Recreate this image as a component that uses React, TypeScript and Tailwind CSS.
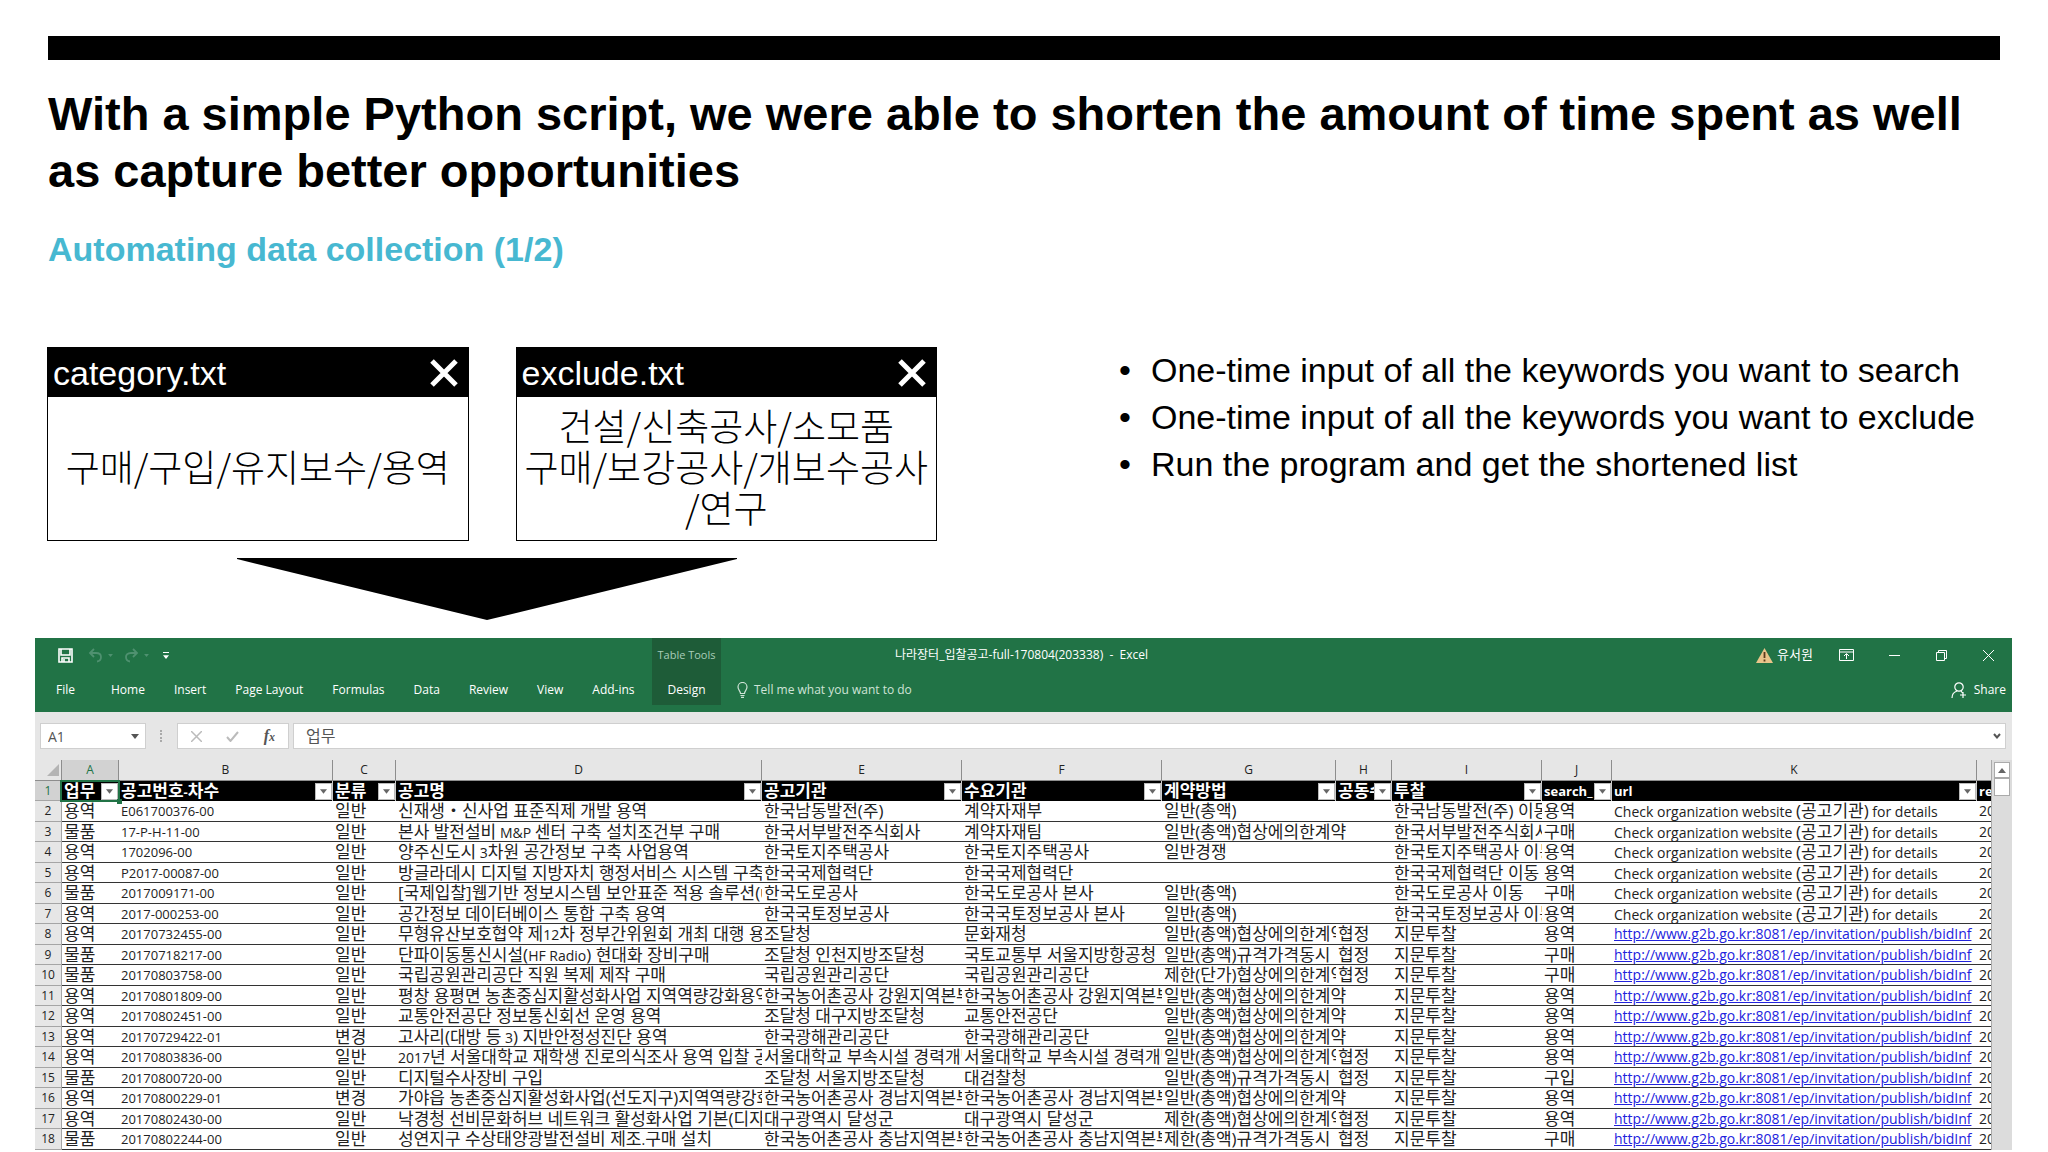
import { Fragment } from 'react'

const columns = [
  { letter: 'A', title: '업무', width: 'w-[57px]' },
  { letter: 'B', title: '공고번호-차수', width: 'w-[214px]' },
  { letter: 'C', title: '분류', width: 'w-[63px]' },
  { letter: 'D', title: '공고명', width: 'w-[366px]' },
  { letter: 'E', title: '공고기관', width: 'w-[200px]' },
  { letter: 'F', title: '수요기관', width: 'w-[200px]' },
  { letter: 'G', title: '계약방법', width: 'w-[174px]' },
  { letter: 'H', title: '공동수', width: 'w-[56px]' },
  { letter: 'I', title: '투찰', width: 'w-[150px]' },
  { letter: 'J', title: 'search_', width: 'w-[70px]' },
  { letter: 'K', title: 'url', width: '' },
  { letter: '', title: 're', width: 'w-[14px]' },
]

const SITE = 'Check organization website (공고기관) for details'
const URL = 'http://www.g2b.go.kr:8081/ep/invitation/publish/bidInf'

const rows = [
  ['용역', 'E061700376-00', '일반', '신재생・신사업 표준직제 개발 용역', '한국남동발전(주)', '계약자재부', '일반(총액)', '', '한국남동발전(주) 이동', '용역', SITE],
  ['물품', '17-P-H-11-00', '일반', '본사 발전설비 M&P 센터 구축 설치조건부 구매', '한국서부발전주식회사', '계약자재팀', '일반(총액)협상에의한계약', '', '한국서부발전주식회사', '구매', SITE],
  ['용역', '1702096-00', '일반', '양주신도시 3차원 공간정보 구축 사업용역', '한국토지주택공사', '한국토지주택공사', '일반경쟁', '', '한국토지주택공사 이동', '용역', SITE],
  ['용역', 'P2017-00087-00', '일반', '방글라데시 디지털 지방자치 행정서비스 시스템 구축사', '한국국제협력단', '한국국제협력단', '', '', '한국국제협력단 이동', '용역', SITE],
  ['물품', '2017009171-00', '일반', '[국제입찰]웹기반 정보시스템 보안표준 적용 솔루션(U', '한국도로공사', '한국도로공사 본사', '일반(총액)', '', '한국도로공사 이동', '구매', SITE],
  ['용역', '2017-000253-00', '일반', '공간정보 데이터베이스 통합 구축 용역', '한국국토정보공사', '한국국토정보공사 본사', '일반(총액)', '', '한국국토정보공사 이동', '용역', SITE],
  ['용역', '20170732455-00', '일반', '무형유산보호협약 제12차 정부간위원회 개최 대행 용역', '조달청', '문화재청', '일반(총액)협상에의한계약', '협정', '지문투찰', '용역', URL],
  ['물품', '20170718217-00', '일반', '단파이동통신시설(HF Radio) 현대화 장비구매', '조달청 인천지방조달청', '국토교통부 서울지방항공청', '일반(총액)규격가격동시', '협정', '지문투찰', '구매', URL],
  ['물품', '20170803758-00', '일반', '국립공원관리공단 직원 복제 제작 구매', '국립공원관리공단', '국립공원관리공단', '제한(단가)협상에의한계약', '협정', '지문투찰', '구매', URL],
  ['용역', '20170801809-00', '일반', '평창 용평면 농촌중심지활성화사업 지역역량강화용역', '한국농어촌공사 강원지역본부', '한국농어촌공사 강원지역본부', '일반(총액)협상에의한계약', '', '지문투찰', '용역', URL],
  ['용역', '20170802451-00', '일반', '교통안전공단 정보통신회선 운영 용역', '조달청 대구지방조달청', '교통안전공단', '일반(총액)협상에의한계약', '', '지문투찰', '용역', URL],
  ['용역', '20170729422-01', '변경', '고사리(대방 등 3) 지반안정성진단 용역', '한국광해관리공단', '한국광해관리공단', '일반(총액)협상에의한계약', '', '지문투찰', '용역', URL],
  ['용역', '20170803836-00', '일반', '2017년 서울대학교 재학생 진로의식조사 용역 입찰 공고', '서울대학교 부속시설 경력개발', '서울대학교 부속시설 경력개발', '일반(총액)협상에의한계약', '협정', '지문투찰', '용역', URL],
  ['물품', '20170800720-00', '일반', '디지털수사장비 구입', '조달청 서울지방조달청', '대검찰청', '일반(총액)규격가격동시', '협정', '지문투찰', '구입', URL],
  ['용역', '20170800229-01', '변경', '가야읍 농촌중심지활성화사업(선도지구)지역역량강화', '한국농어촌공사 경남지역본부', '한국농어촌공사 경남지역본부', '일반(총액)협상에의한계약', '', '지문투찰', '용역', URL],
  ['용역', '20170802430-00', '일반', '낙경청 선비문화허브 네트워크 활성화사업 기본(디자인', '대구광역시 달성군', '대구광역시 달성군', '제한(총액)협상에의한계약', '협정', '지문투찰', '용역', URL],
  ['물품', '20170802244-00', '일반', '성연지구 수상태양광발전설비 제조.구매 설치', '한국농어촌공사 충남지역본부', '한국농어촌공사 충남지역본부', '제한(총액)규격가격동시', '협정', '지문투찰', '구매', URL],
]

const tabs = ['Insert', 'Page Layout', 'Formulas', 'Data', 'Review', 'View', 'Add-ins']

const bullets = [
  'One-time input of all the keywords you want to search',
  'One-time input of all the keywords you want to exclude',
  'Run the program and get the shortened list',
]

// Hangul is set larger than the Latin letters and digits around it
function Mixed({ text }: { text: string }) {
  const parts = text.split(/([가-힣・()[\]]+(?:\s+(?=[가-힣]))?)/)
  return (
    <>
      {parts.map((part, i) =>
        i % 2 === 1 ? (
          <span key={i} className="text-[17px]">{part}</span>
        ) : (
          <Fragment key={i}>{part}</Fragment>
        )
      )}
    </>
  )
}

function Card({ name, children }: { name: string; children: React.ReactNode }) {
  return (
    <div className="flex h-[194px] flex-1 flex-col border border-black">
      <div className="flex h-[49px] items-center justify-between bg-black pl-[5px] pr-[10px] text-white">
        <span className="text-[34px] leading-[40px]">{name}</span>
        <button aria-label={`Close ${name}`}>
          <svg className="h-7 w-7" viewBox="0 0 28 28" stroke="currentColor" strokeWidth="5">
            <path d="M2 2L26 26M26 2L2 26" />
          </svg>
        </button>
      </div>
      <div className="flex flex-1 items-center justify-center pb-[4px] text-center font-['Noto_Sans_CJK_KR',sans-serif] text-[37px] font-light leading-[41px]">
        <p>{children}</p>
      </div>
    </div>
  )
}

function Caret({ className }: { className: string }) {
  return (
    <svg className={className} viewBox="0 0 8 5" fill="currentColor">
      <path d="M0 0h8L4 5z" />
    </svg>
  )
}

function TitleBar() {
  return (
    <div className="flex h-[34px] items-center">
      <div className="flex w-[617px] items-center pl-[23px]">
        <button aria-label="Save">
          <svg className="h-[15px] w-[15px]" viewBox="0 0 15 15" fill="none" stroke="currentColor" strokeWidth="1.6">
            <path d="M1 1h13v13H1zM3 1v6h9V1M4 14v-4h7v4M6 11v3" />
          </svg>
        </button>
        <button aria-label="Undo" className="ml-[15px] flex items-center gap-[5px] text-[#4f9170]">
          <svg className="h-[15px] w-[15px]" viewBox="0 0 15 15" fill="none" stroke="currentColor" strokeWidth="1.8">
            <path d="M6 1L2 5l4 4M2 5h6c7 0 6 8 1 8.500" />
          </svg>
          <Caret className="h-[3px] w-[5px]" />
        </button>
        <button aria-label="Redo" className="ml-[11px] flex items-center gap-[5px] text-[#4f9170]">
          <svg className="h-[15px] w-[15px]" viewBox="0 0 15 15" fill="none" stroke="currentColor" strokeWidth="1.8">
            <path d="M9 1l4 4-4 4M13 5H7C0 5 1 13 6 13.500" />
          </svg>
          <Caret className="h-[3px] w-[5px]" />
        </button>
        <button aria-label="Customize toolbar" className="ml-[14px] flex flex-col items-center gap-[2px]">
          <span className="h-px w-[6px] bg-white" />
          <Caret className="h-[4px] w-[6px]" />
        </button>
      </div>
      <div className="flex h-full w-[69px] items-center justify-center bg-[#1e5c38] text-[11px] text-[#a9cdb8]">Table Tools</div>
      <div className="flex-1 pl-[174px] text-[12px] whitespace-pre">나라장터_입찰공고-full-170804(203338)  -  Excel</div>
      <div className="flex items-center pr-[18px]">
        <svg className="h-[15px] w-[17px]" viewBox="0 0 17 15">
          <path d="M8.500 0L17 15H0z" fill="#e9c48a" />
          <path d="M8.500 4v6M8.500 11.500v2" stroke="#5a3a1c" strokeWidth="1.800" />
        </svg>
        <span className="ml-[4px] text-[13px]">유서원</span>
        <button aria-label="Ribbon display options" className="ml-[26px]">
          <svg className="h-[12px] w-[15px]" viewBox="0 0 15 12" fill="none" stroke="currentColor">
            <path d="M.5.500h14v11H.500zM.500 3h14M7.500 10V5M5 7l2.500-2.500L10 7" />
          </svg>
        </button>
        <button aria-label="Minimize" className="ml-[35px]">
          <svg className="h-[11px] w-[11px]" viewBox="0 0 11 11" stroke="currentColor">
            <path d="M0 5.500h11" />
          </svg>
        </button>
        <button aria-label="Restore" className="ml-[36px]">
          <svg className="h-[11px] w-[11px]" viewBox="0 0 11 11" fill="none" stroke="currentColor">
            <path d="M.5 2.500h8v8h-8zM2.500 2V.500h8v8H9" />
          </svg>
        </button>
        <button aria-label="Close" className="ml-[36px]">
          <svg className="h-[11px] w-[11px]" viewBox="0 0 11 11" stroke="currentColor">
            <path d="M0 0l11 11M11 0L0 11" />
          </svg>
        </button>
      </div>
    </div>
  )
}

function Ribbon() {
  return (
    <nav className="flex h-[40px] items-start text-[12px] leading-[36px]">
      <div className="flex w-[617px] pl-[21px]">
        <button>File</button>
        <button className="ml-[36px]">Home</button>
        {tabs.map((tab) => (
          <button key={tab} className="ml-[29px] whitespace-nowrap">{tab}</button>
        ))}
      </div>
      <button className="h-[33px] w-[69px] bg-[#1e5c38]">Design</button>
      <button className="ml-[16px] flex items-center gap-[6px] text-[#cfe3d7]">
        <svg className="h-[16px] w-[11px]" viewBox="0 0 11 16" fill="none" stroke="currentColor" strokeWidth="1.200">
          <path d="M3.500 11.500C3.500 9 1 8 1 5a4.500 4.500 0 019 0c0 3-2.500 4-2.500 6.500zM3.500 13.500h4M4 15.300h3" />
        </svg>
        Tell me what you want to do
      </button>
      <button className="ml-auto mr-[6px] flex items-center gap-[7px]">
        <svg className="h-[17px] w-[16px]" viewBox="0 0 16 17" fill="none" stroke="currentColor" strokeWidth="1.200">
          <circle cx="8" cy="5" r="4.200" />
          <path d="M1 16c0-4 2-6 5-7M10 9l1.500 2M12 10v6M9 13h6" />
        </svg>
        Share
      </button>
    </nav>
  )
}

function FormulaBar() {
  return (
    <div className="flex h-[48px] items-center pl-[5px] pr-[6px] text-[#555]">
      <div className="flex h-[26px] w-[106px] items-center justify-between border border-[#cfcfcf] bg-white pr-[6px]">
        <input aria-label="Name box" defaultValue="A1" className="w-[80px] pl-[7px] text-[14px] outline-none" />
        <Caret className="h-[5px] w-[8px]" />
      </div>
      <span className="mx-[14px] h-[12px] w-[3px] border-l-2 border-dotted border-[#aaa]" />
      <div className="flex h-[26px] w-[112px] items-center justify-between border border-[#cfcfcf] bg-white px-[13px]">
        <button aria-label="Cancel">
          <svg className="h-[11px] w-[11px] text-[#bbb]" viewBox="0 0 11 11" stroke="currentColor" strokeWidth="1.500">
            <path d="M0 0l11 11M11 0L0 11" />
          </svg>
        </button>
        <button aria-label="Enter">
          <svg className="h-[11px] w-[13px] text-[#bbb]" viewBox="0 0 13 11" fill="none" stroke="currentColor" strokeWidth="2">
            <path d="M1 6l3.500 4L12 1" />
          </svg>
        </button>
        <button aria-label="Insert function" className="font-['Liberation_Serif',serif] text-[16px] leading-[20px] font-bold italic">
          f<span className="text-[12px]">x</span>
        </button>
      </div>
      <div className="ml-[4px] flex h-[26px] flex-1 items-center border border-[#cfcfcf] bg-white pr-[4px]">
        <input aria-label="Formula" defaultValue="업무" className="flex-1 pl-[12px] text-[16px] outline-none" />
        <svg className="h-[6px] w-[8px]" viewBox="0 0 8 6" fill="none" stroke="currentColor" strokeWidth="2">
          <path d="M1 1l3 3.500L7 1" />
        </svg>
      </div>
    </div>
  )
}

function Sheet() {
  return (
    <div className="relative min-w-0 flex-1">
      <table className="w-full table-fixed border-separate border-spacing-0 whitespace-nowrap bg-white text-left text-[14px] text-[#222]">
        <colgroup>
          <col className="w-[27px]" />
          {columns.map((col) => (
            <col key={col.title} className={col.width} />
          ))}
        </colgroup>
        <thead>
          <tr className="h-[21px] bg-[#e6e6e6] text-center">
            <th className="border-b border-r border-[#8d8d8d] p-0">
              <svg className="ml-auto mr-[2px] h-[12px] w-[12px] text-[#b4b4b4]" viewBox="0 0 12 12" fill="currentColor">
                <path d="M12 0v12H0z" />
              </svg>
            </th>
            {columns.map((col, i) => (
              <th
                key={col.title}
                className={`border-b border-[#8d8d8d] p-0 text-[12px] leading-[20px] font-normal ${
                  i === 0 ? 'bg-[#d2d2d2] text-[#217346]' : ''
                } ${i === 11 ? '' : 'border-r'}`}
              >
                {col.letter}
              </th>
            ))}
          </tr>
          <tr className="h-[20px] bg-black text-white">
            <th className="border-b border-r border-[#a5a5a5] bg-[#d2d2d2] p-0 text-center text-[12px] leading-[19px] font-normal text-[#217346]">1</th>
            {columns.map((col, i) => (
              <th key={col.title} className={`border-[#ccc] p-0 pl-[2px] font-bold ${i === 11 ? '' : 'border-r'}`}>
                <div className="flex h-[20px] items-center justify-between leading-[18px]">
                  <span className="min-w-0 flex-1 overflow-x-clip text-[13px]"><Mixed text={col.title} /></span>
                  {i < 11 && (
                    <button aria-label={`Filter ${col.title}`} className="flex h-[17px] w-[17px] shrink-0 items-center justify-center border border-[#bbb] bg-white text-[#666]">
                      <Caret className="h-[5px] w-[7px]" />
                    </button>
                  )}
                </div>
              </th>
            ))}
          </tr>
        </thead>
        <tbody>
          {rows.map((row, r) => (
            <tr key={r} className="odd:h-[21px] even:h-[20px]">
              <th className="border-b border-r border-[#a5a5a5] bg-[#e6e6e6] p-0 text-center text-[12px] leading-[18px] font-normal">
                {r + 2}
              </th>
              {row.map((cell, c) => (
                <td key={c} className={`border-b border-[#333] p-0 pl-[2px] leading-[18px] ${c === 1 ? 'text-[13px]' : ''}`}>
                  {/* text runs on into the next column only when that cell is empty */}
                  <div className={`h-[18px] ${c === 6 && !row[7] ? '' : 'overflow-x-clip'}`}>
                    {cell === URL ? (
                      <a href={URL} className="text-[#2222dd] underline">{cell}</a>
                    ) : (
                      <Mixed text={cell} />
                    )}
                  </div>
                </td>
              ))}
              <td className="border-b border-[#333] p-0 pl-[2px] leading-[18px]">
                <div className="h-[18px] overflow-x-clip">20</div>
              </td>
            </tr>
          ))}
        </tbody>
      </table>
      {/* selected cell */}
      <div className="pointer-events-none absolute left-[25px] top-[20px] h-[22px] w-[60px] border-2 border-[#217346]" />
      <div className="pointer-events-none absolute left-[82px] top-[39px] h-[5px] w-[5px] bg-[#217346]" />
    </div>
  )
}

export default function App() {
  return (
    <main className="min-h-screen overflow-hidden bg-white pt-9 font-['Liberation_Sans','Noto_Sans_CJK_KR',sans-serif] text-black">
      <header className="mx-12">
        <div className="h-6 bg-black" />
        <h1 className="mt-[25px] text-[47px] font-bold leading-[57px]">
          With a simple Python script, we were able to shorten the amount of time spent as well as capture better opportunities
        </h1>
        <h2 className="mt-[30px] text-[34px] font-bold leading-[40px] text-[#47b8d1]">Automating data collection (1/2)</h2>
      </header>

      <section className="mx-[47px] mt-[78px] grid grid-cols-[890fr_882fr] gap-x-[182px]">
        <div>
          <div className="flex gap-[47px]">
            <Card name="category.txt">구매/구입/유지보수/용역</Card>
            <Card name="exclude.txt">
              건설/신축공사/소모품
              <br />
              구매/보강공사/개보수공사
              <br />
              /연구
            </Card>
          </div>
          <div className="mt-[17px] flex justify-center pr-[10px]">
            <svg className="h-[62px] w-[500px]" viewBox="0 0 500 62">
              <path d="M0 0h500v1L250 62 0 1z" />
            </svg>
          </div>
        </div>
        <ul className="list-none text-[34px] leading-[47px] whitespace-nowrap">
          {bullets.map((item) => (
            <li key={item} className="flex">
              <span className="w-[32px]">•</span>
              {item}
            </li>
          ))}
        </ul>
      </section>

      <section className="ml-[35px] mr-[36px] mt-[18px] bg-[#e6e6e6] font-['Open_Sans','Noto_Sans_CJK_KR',sans-serif]">
        <div className="bg-[#217346] text-white">
          <TitleBar />
          <Ribbon />
        </div>
        <FormulaBar />
        <div className="flex">
          <Sheet />
          <div className="w-[21px] border-l border-[#aaa] bg-[#dcdcdc] pl-[2px] pt-[2px]">
            <button aria-label="Scroll up" className="flex h-[16px] w-[16px] items-center justify-center border border-[#aaa] bg-white text-[#666]">
              <Caret className="h-[5px] w-[8px] rotate-180" />
            </button>
            <div className="h-[18px] w-[16px] border border-[#aaa] bg-white" />
          </div>
        </div>
      </section>
    </main>
  )
}
